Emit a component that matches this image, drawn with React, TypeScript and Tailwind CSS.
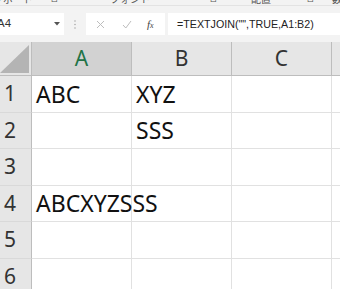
import { Fragment } from 'react';

const COLS = ['A', 'B', 'C'];
const ROWS = [
  { n: 1, cells: ['ABC', 'XYZ', ''] },
  { n: 2, cells: ['', 'SSS', ''] },
  { n: 3, cells: ['', '', ''] },
  { n: 4, cells: ['ABCXYZSSS', '', ''] },
  { n: 5, cells: ['', '', ''] },
  { n: 6, cells: ['', '', ''] },
];

const cellFont = { fontFamily: '"Noto Sans", "Noto Sans CJK JP", sans-serif' };

export default function App() {
  return (
    <div
      className="w-[340px] h-[289px] overflow-hidden bg-[#f3f3f3] text-[#222]"
      style={{ fontFamily: '"Liberation Sans", "Noto Sans CJK JP", sans-serif' }}
    >
      {/* ribbon group labels, cut off at the top */}
      <div className="h-[6px] overflow-hidden relative border-b border-[#e3e3e3]">
        <div className="flex items-end h-[6px] text-[10px] leading-[12px] text-[#555] whitespace-nowrap">
          <span className="ml-[-37px] w-[70px]">クリップボード</span>
          <span className="w-[1px] h-[6px] bg-[#999]" />
          <span className="ml-[18px] text-[8px]">⊡</span>
          <span className="ml-[52px]">フォント</span>
          <span className="ml-[60px] text-[8px]">⊡</span>
          <span className="ml-[34px]">配置</span>
          <span className="ml-[36px] text-[8px]">⊡</span>
          <span className="ml-[18px]">数値</span>
        </div>
      </div>

      {/* formula bar */}
      <div className="flex items-center h-[36px]">
        <div className="w-[64px] h-[22px] bg-white flex items-center">
          <span className="ml-[-3px] text-[11.5px] text-[#333]">A4</span>
          <svg className="ml-auto mr-[4px]" width="6" height="4" viewBox="0 0 6 4">
            <path d="M0 0H6L3 3.5Z" fill="#555" />
          </svg>
        </div>
        <div className="w-[22px] flex justify-center">
          <svg width="2" height="9" viewBox="0 0 2 9">
            <circle cx="1" cy="1" r="0.8" fill="#aaa" />
            <circle cx="1" cy="4.5" r="0.8" fill="#aaa" />
            <circle cx="1" cy="8" r="0.8" fill="#aaa" />
          </svg>
        </div>
        <div className="w-[79px] h-[22px] bg-white flex items-center">
          <svg className="ml-[10px]" width="9" height="9" viewBox="0 0 9 9">
            <path d="M1 1L8 8M8 1L1 8" stroke="#bdbdbd" strokeWidth="1" />
          </svg>
          <svg className="ml-[17px]" width="10" height="9" viewBox="0 0 10 9">
            <path d="M1 5L3.8 8L9 1" stroke="#bdbdbd" strokeWidth="1" fill="none" />
          </svg>
          <span
            className="ml-[15px] text-[11px] italic text-[#444]"
            style={{ fontFamily: '"Liberation Serif", serif' }}
          >
            f<span className="text-[8px]">x</span>
          </span>
        </div>
        <div className="ml-[3px] flex-1 h-[22px] bg-white flex items-center">
          <span className="ml-[9px] text-[10.7px] text-[#222]">=TEXTJOIN("",TRUE,A1:B2)</span>
        </div>
      </div>

      {/* sheet grid */}
      <div
        className="grid grid-cols-[32px_100px_100px_100px_8px] grid-rows-[34px_37px_36px_37px_36px_37px_37px] bg-white"
        style={cellFont}
      >
        <div className="bg-[#e6e6e6] border-r border-b border-[#bdbdbd] relative overflow-hidden">
          <svg className="absolute left-0 bottom-[2px]" width="29" height="28" viewBox="0 0 29 28">
            <path d="M0 28L29 0V28Z" fill="#b4b4b4" />
          </svg>
        </div>
        {COLS.map((c) => (
          <div
            key={c}
            className={
              c === 'A'
                ? 'bg-[#d2d2d2] border-r border-b border-[#bdbdbd] flex items-center justify-center text-[21px] text-[#217346]'
                : 'bg-[#e6e6e6] border-r border-b border-[#bdbdbd] flex items-center justify-center text-[21px] text-[#333]'
            }
          >
            {c}
          </div>
        ))}
        <div className="bg-[#e6e6e6] border-b border-[#bdbdbd]" />

        {ROWS.map((r) => (
          <Fragment key={r.n}>
            <div className="bg-[#e6e6e6] border-r border-b border-[#bdbdbd] border-b-[#d9d9d9] flex items-center pl-[4px] text-[21px] text-[#333]">
              {r.n}
            </div>
            {r.cells.map((v, i) => (
              <div
                key={i}
                className="border-r border-b border-[#e1e1e1] flex items-center pl-[4px] text-[23px] text-[#111] whitespace-nowrap overflow-visible"
              >
                {v}
              </div>
            ))}
            <div className="border-b border-[#e1e1e1]" />
          </Fragment>
        ))}
      </div>
    </div>
  );
}
